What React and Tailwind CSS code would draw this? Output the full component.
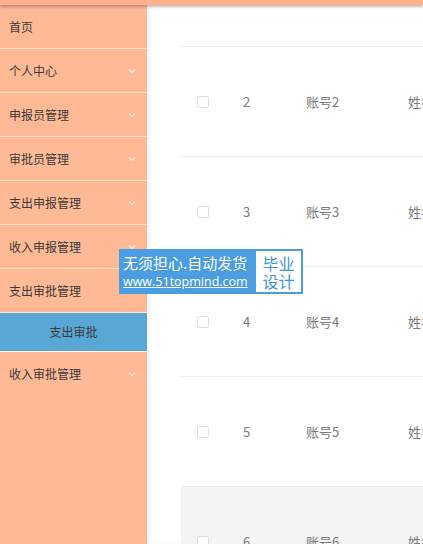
import React from "react";

const menu = [
  { label: "首页", arrow: false },
  { label: "个人中心", arrow: true },
  { label: "申报员管理", arrow: true },
  { label: "审批员管理", arrow: true },
  { label: "支出申报管理", arrow: true },
  { label: "收入申报管理", arrow: true },
  { label: "支出审批管理", arrow: false, open: true },
];

const rows = [2, 3, 4, 5, 6];

function Chevron() {
  return (
    <svg width="10" height="10" viewBox="0 0 10 10" className="opacity-70">
      <path d="M2 3.5 L5 6.5 L8 3.5" fill="none" stroke="#ffffff" strokeWidth="1.1" />
    </svg>
  );
}

export default function App() {
  const font = { fontFamily: '"Noto Sans CJK SC", "Noto Sans", sans-serif' };
  return (
    <div className="relative w-[423px] h-[544px] overflow-hidden bg-white" style={font}>
      <div className="h-[5px] bg-[#ffb08c] shadow-[0_2px_3px_rgba(0,0,0,0.25)] relative z-10" />
      <div className="flex h-[539px]">
        <div className="w-[147px] shrink-0 bg-[#ffb994] flex flex-col">
          {menu.map((m) => (
            <div
              key={m.label}
              className="h-[44px] shrink-0 flex items-center justify-between pl-[9px] pr-[10px] border-b border-white/60 text-[12px] text-[#3a3a3a]"
            >
              <span>{m.label}</span>
              {m.arrow && <Chevron />}
            </div>
          ))}
          <div className="h-[39px] shrink-0 bg-[#58a7d4] border-b border-white flex items-center justify-center text-[12px] text-[#3a3a3a]">
            支出审批
          </div>
          <div className="h-[44px] shrink-0 flex items-center justify-between pl-[9px] pr-[10px] text-[12px] text-[#3a3a3a]">
            <span>收入审批管理</span>
            <Chevron />
          </div>
        </div>
        <div className="flex-1 overflow-hidden pl-[34px] pt-[41px] shadow-[inset_3px_0_4px_rgba(0,0,0,0.04)]">
          <div className="w-[400px]">
            {rows.map((n) => (
              <div
                key={n}
                className={`h-[110px] flex items-center border-t border-[#ebeef5] text-[13px] text-[#7a7a7a] ${n === 6 ? "bg-[#f4f4f4]" : ""}`}
              >
                <div className="w-[44px] flex justify-center">
                  <div className="w-[12px] h-[12px] border border-[#dcdfe6] rounded-[2px] bg-white" />
                </div>
                <div className="w-[63px] pl-[18px]">{n}</div>
                <div className="w-[102px] pl-[18px]">账号{n}</div>
                <div className="pl-[18px] whitespace-nowrap">姓名{n}</div>
              </div>
            ))}
          </div>
        </div>
      </div>
      <div className="absolute left-[119px] top-[249px] w-[184px] h-[45px] bg-[#4a9de0] flex items-center pl-[4px] pr-[2px] gap-[2px]">
        <div className="flex flex-col items-start text-white leading-none">
          <span className="text-[15px] leading-[20px]">无须担心.自动发货</span>
          <span className="text-[12.5px] leading-[18px] underline" style={{ fontFamily: '"Open Sans", "Noto Sans", sans-serif' }}>www.51topmind.com</span>
        </div>
        <div className="ml-auto w-[45px] h-[41px] bg-white flex flex-col items-center justify-center text-[#3f95dc] text-[16px] leading-[18px]">
          <span>毕业</span>
          <span>设计</span>
        </div>
      </div>
    </div>
  );
}
